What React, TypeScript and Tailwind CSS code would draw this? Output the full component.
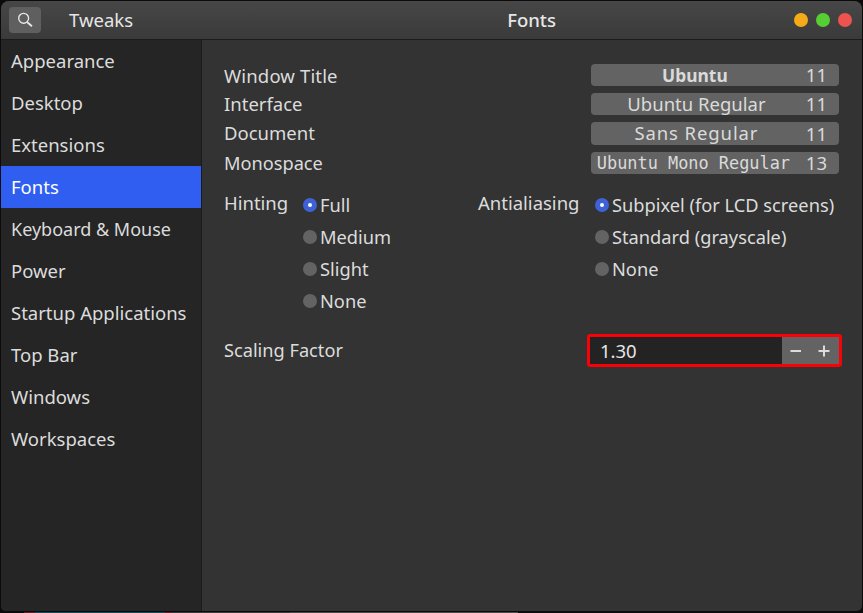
const items = ["Appearance","Desktop","Extensions","Fonts","Keyboard & Mouse","Power","Startup Applications","Top Bar","Windows","Workspaces"];
const fonts = [
  { label: "Window Title", labelCls: "pt-[1px] tracking-[0.15px]", value: "Ubuntu", size: "11", cls: "font-bold text-[17.4px] pr-[3px]", h: "h-[22px]", mb: "mb-[7px]" },
  { label: "Interface", labelCls: "", value: "Ubuntu Regular", size: "11", cls: "", h: "h-[22px]", mb: "mb-[7px]" },
  { label: "Document", labelCls: "pb-[1px]", value: "Sans Regular", size: "11", cls: "tracking-[0.9px] pb-[1px]", h: "h-[23px]", mb: "mb-[7px]" },
  { label: "Monospace", labelCls: "text-[18.2px]", value: "Ubuntu Mono Regular", size: "13", cls: "mono", h: "h-[22px]", mb: "" },
];
function Radio({ on }: { on?: boolean }) {
  return on ? (
    <span className="w-[14px] h-[14px] rounded-full bg-[#3d62d8] flex items-center justify-center shrink-0">
      <span className="w-[4px] h-[4px] rounded-full bg-white" />
    </span>
  ) : (
    <span className="w-[14px] h-[14px] rounded-full bg-[#636363] shrink-0" />
  );
}
function Opt({ label, on }: { label: string; on?: boolean }) {
  return (
    <div className="h-[32px] flex items-center gap-[3px] text-[18.25px]">
      <Radio on={on} />
      <span>{label}</span>
    </div>
  );
}
export default function App() {
  return (
    <div className="w-[863px] h-[613px] bg-[#0c0b0b] pt-[1px] text-[18.5px] leading-[22px] text-[#dcdcdc] overflow-hidden flex flex-col" style={{ fontFamily: '"Noto Sans", sans-serif' }}>
      <div className="flex-1 min-h-0 mx-[1px] mb-[1px] rounded-t-[8px] rounded-b-[5px] overflow-hidden flex flex-col bg-[#333333]">
        <div className="h-[38px] shrink-0 flex items-center bg-gradient-to-b from-[#474747] to-[#3a3a3a] border-b border-[#1b1b1b] box-content">
          <div className="w-[200px] shrink-0 flex items-center pl-[8px]">
            <div className="w-[32px] h-[26px] rounded-[4px] bg-[#5f5f5f] flex items-center justify-center">
              <svg width="18" height="18" viewBox="0 0 16 16" fill="none" stroke="#e8e8e8" strokeWidth="1.2">
                <circle cx="6.8" cy="6.5" r="4.4" />
                <path d="M10 10l4.2 3.6" strokeWidth="1.6" />
              </svg>
            </div>
            <span className="ml-[28px] text-[#e6e6e6]">Tweaks</span>
          </div>
          <div className="flex-1 flex items-center justify-center text-[#e6e6e6] font-medium">Fonts</div>
          <div className="flex items-center gap-[8px] pr-[10px] shrink-0 -ml-[68px]">
            <span className="w-[14px] h-[14px] rounded-full bg-[#f4ab17]" />
            <span className="w-[14px] h-[14px] rounded-full bg-[#56cf35]" />
            <span className="w-[14px] h-[14px] rounded-full bg-[#ef5350]" />
          </div>
        </div>
        <div className="flex-1 flex min-h-0">
          <div className="w-[200px] shrink-0 bg-[#252525] border-r border-[#1c1c1c] box-content">
            {items.map((t) => (
              <div key={t} className={`h-[42px] flex items-center pl-[10px] ${t === "Fonts" ? "bg-[#2f5ef0] text-white" : ""} ${t === "Keyboard & Mouse" ? "text-[18px]" : ""}`}>{t}</div>
            ))}
          </div>
          <div className="flex-1 pl-[22px] pr-[23px] pt-[24px]">
            <div className="flex flex-col">
              {fonts.map((f) => (
                <div key={f.label} className={`flex items-center justify-between ${f.h} ${f.mb}`}>
                  <span className={f.labelCls}>{f.label}</span>
                  <div className={`w-[248px] ${f.h} rounded-[4px] bg-[#636363] flex items-center pr-[12px] text-[#dadada]`}>
                    <span
                      className={`flex-1 text-center ${f.cls === "mono" ? "text-[16.9px] pr-[6px]" : f.cls}`}
                      style={f.cls === "mono" ? { fontFamily: '"DejaVu Sans Mono", monospace' } : undefined}
                    >{f.value}</span>
                    <span className="ml-[4px]">{f.size}</span>
                  </div>
                </div>
              ))}
            </div>
            <div className="flex mt-[15px]">
              <div className="w-[254px] flex shrink-0">
                <span className="w-[78px] h-[28px] flex items-center">Hinting</span>
                <div className="pl-[1px]">
                  <Opt label="Full" on />
                  <Opt label="Medium" />
                  <Opt label="Slight" />
                  <Opt label="None" />
                </div>
              </div>
              <div className="flex">
                <span className="w-[117px] h-[28px] flex items-center">Antialiasing</span>
                <div>
                  <Opt label="Subpixel (for LCD screens)" on />
                  <Opt label="Standard (grayscale)" />
                  <Opt label="None" />
                </div>
              </div>
            </div>
            <div className="flex items-center justify-between mt-[17px]">
              <span className="pb-[2px] text-[18.2px]">Scaling Factor</span>
              <div className="w-[255px] h-[33px] -mr-[3px] border-[3px] border-[#fb0007] rounded-[3px] flex bg-[#232323]">
                <span className="flex-1 pl-[10px] flex items-center text-[#e6e6e6]">1.30</span>
                <div className="w-[57px] bg-[#636363] flex items-center pl-[8px] gap-[16px]">
                  <svg width="12" height="12" viewBox="0 0 12 12" fill="#dcdcdc"><rect x="0.5" y="5" width="10.5" height="2" /></svg>
                  <svg width="12" height="12" viewBox="0 0 12 12" fill="#dcdcdc"><rect x="0.5" y="5" width="11" height="2" /><rect x="5" y="0.5" width="2" height="11" /></svg>
                </div>
              </div>
            </div>
          </div>
        </div>
      </div>
      <div className="h-px shrink-0 bg-[linear-gradient(90deg,#0c0b0b_0,#0c0b0b_24px,#6a1c22_24px,#6a1c22_35px,#1d4a5c_35px,#1d4a5c_165px,#6a1c22_165px,#6a1c22_171px,#3a3a3a_171px,#3a3a3a_290px,#4a4a4a_290px,#4a4a4a_518px,#0c0b0b_518px,#0c0b0b_863px)]" />
    </div>
  );
}
